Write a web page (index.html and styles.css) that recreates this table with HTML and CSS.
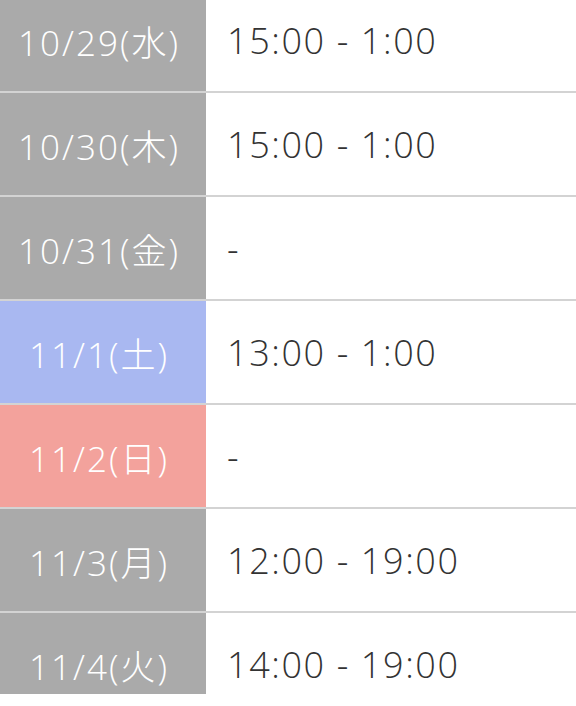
FILE: index.html
```html
<!DOCTYPE html>
<html lang="ja">
<head>
<meta charset="utf-8">
<link rel="stylesheet" href="styles.css">
</head>
<body>
<div class="viewport">
  <div class="schedule">
    <div class="row"><div class="date">10/29(水)</div><div class="time">15:00 - 1:00</div></div>
    <div class="row"><div class="date">10/30(木)</div><div class="time">15:00 - 1:00</div></div>
    <div class="row"><div class="date">10/31(金)</div><div class="time">-</div></div>
    <div class="row"><div class="date sat">11/1(土)</div><div class="time">13:00 - 1:00</div></div>
    <div class="row"><div class="date sun">11/2(日)</div><div class="time">-</div></div>
    <div class="row"><div class="date">11/3(月)</div><div class="time">12:00 - 19:00</div></div>
    <div class="row"><div class="date">11/4(火)</div><div class="time">14:00 - 19:00</div></div>
  </div>
</div>
</body>
</html>
```
FILE: styles.css
```css
html, body {
  margin: 0;
  padding: 0;
  background: #ffffff;
}
.viewport {
  height: 694px;
  overflow: hidden;
}
.schedule {
  margin-top: -11px;
  display: flex;
  flex-direction: column;
  font-family: "Open Sans", "Noto Sans CJK JP", sans-serif;
  font-weight: 300;
}
.row {
  display: grid;
  grid-template-columns: 206px 1fr;
  height: 102px;
  border-bottom: 2px solid #d3d3d3;
}
.date {
  background: #aaaaaa;
  color: #ffffff;
  font-size: 35px;
  letter-spacing: 2px;
  display: flex;
  align-items: center;
  justify-content: center;
  padding-right: 8px;
}
.date.sat { background: #a9b8f1; }
.date.sun { background: #f3a29c; }
.time {
  color: #333333;
  font-size: 36px;
  letter-spacing: 1.6px;
  display: flex;
  align-items: center;
  padding-left: 21px;
}
```
